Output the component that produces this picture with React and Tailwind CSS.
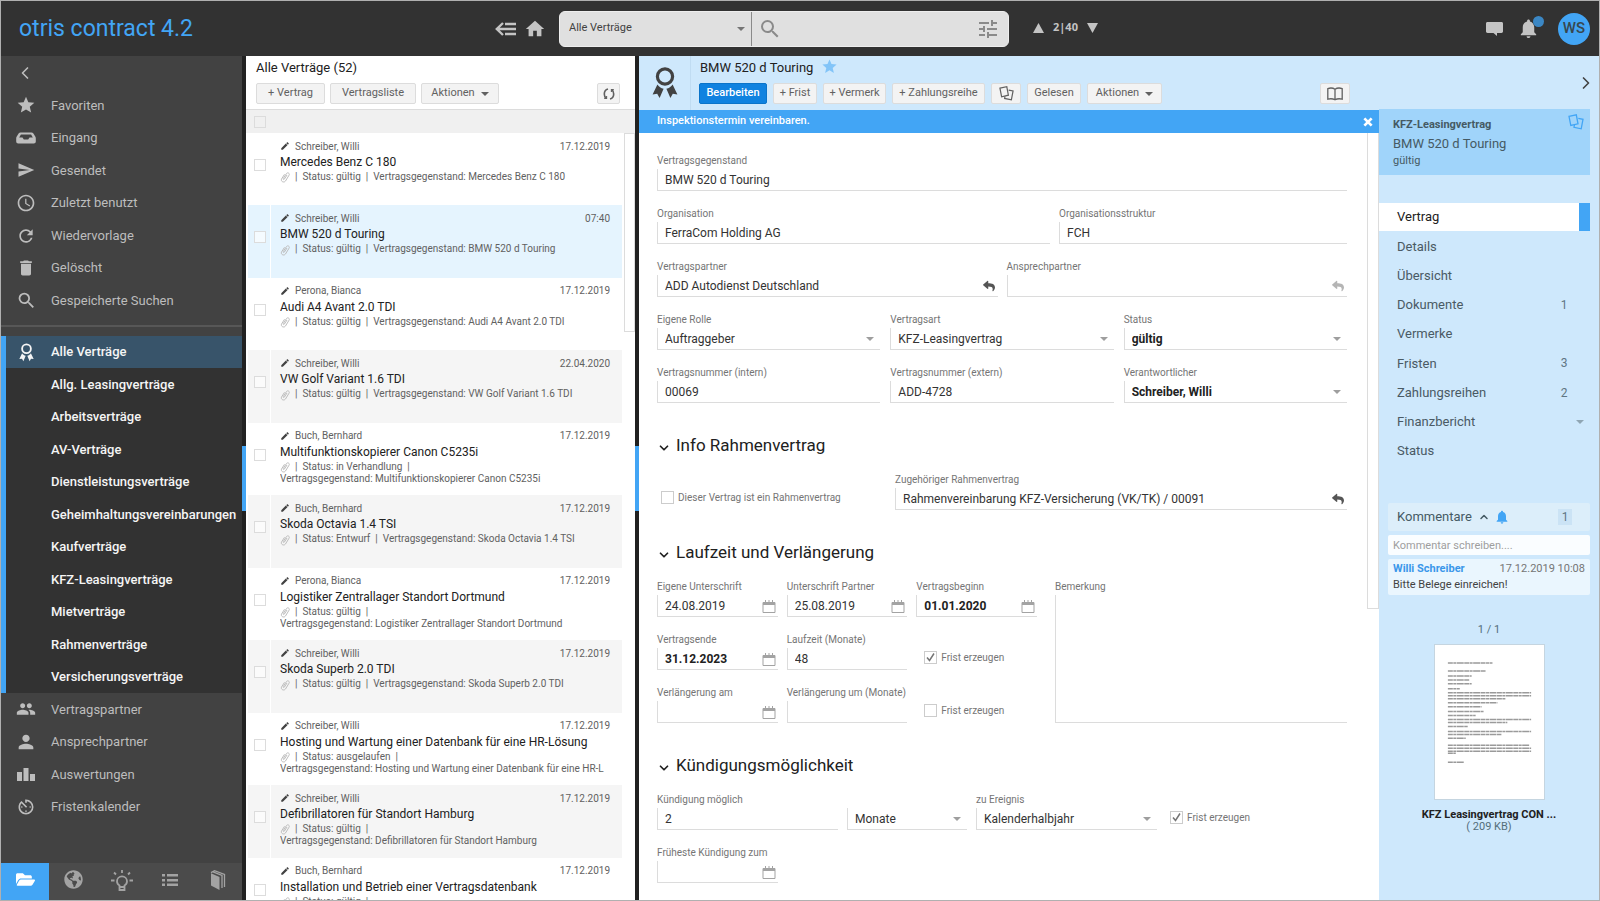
import React, { useState } from "react";
import {
  MdStar,
  MdSend,
  MdAccessTime,
  MdRefresh,
  MdDelete,
  MdSearch,
  MdPeople,
  MdPerson,
  MdAvTimer,
  MdHome,
  MdTune,
  MdNotifications,
  MdEdit,
} from "react-icons/md";
import { FaReply, FaFolderOpen, FaGlobeAmericas } from "react-icons/fa";
import { ChevronLeft, ChevronRight, ChevronDown, ChevronUp } from "lucide-react";
import clsx from "clsx";

const RibbonIcon = ({ className }) => (
  <svg viewBox="0 0 26 32" className={className} fill="none">
    <circle cx="13" cy="9.5" r="7.6" stroke="currentColor" strokeWidth="3.2" />
    <path
      d="M5.4 17.4.6 27.4l4.6-.6 2.4 4.2 4-9.2c-2.600-.6-4.700-2.200-6.200-4.400ZM20.600 17.400 25.400 27.400l-4.600-.6-2.400 4.200-4-9.200c2.600-.6 4.700-2.200 6.200-4.400Z"
      fill="currentColor"
    />
  </svg>
);

const InboxIcon = ({ className }) => (
  <svg viewBox="0 0 20 12" className={className}>
    <path
      fillRule="evenodd"
      fill="currentColor"
      d="M4.500 0.500h11c.8 0 1.400.3 1.900 1l2 3.300c.3.5.4.9.4 1.400v3.300c0 1.100-.8 2-2 2H2.200c-1.200 0-2-.9-2-2V6.200c0-.5.1-.9.4-1.400l2-3.300c.5-.7 1.100-1 1.900-1Zm.4 2L3.200 5.400h3.300l1.300 2h4.400l1.300-2h3.300l-1.700-2.900H4.900Z"
    />
  </svg>
);

const PodiumIcon = ({ className }) => (
  <svg viewBox="0 0 18 13" className={className} fill="currentColor">
    <path d="M0 4h5v9H0zM6.500 0h5v13h-5zM13 6h5v7h-5z" />
  </svg>
);

const BackListIcon = ({ className }) => (
  <svg viewBox="0 0 21 14" className={className} fill="none" stroke="currentColor" strokeWidth="2.4">
    <path d="M8 1 1.800 7 8 13M2 7h19M10 2h11M10 12h11" />
  </svg>
);

const ChatIcon = ({ className }) => (
  <svg viewBox="0 0 17 14" className={className} fill="currentColor">
    <path d="M1.500 0h14c.8 0 1.500.6 1.500 1.400v8.200c0 .8-.7 1.400-1.500 1.400H11v3L7.500 11h-6C.7 11 0 10.400 0 9.600V1.400C0 .6.700 0 1.500 0Z" />
  </svg>
);

const BulbIcon = ({ className }) => (
  <svg viewBox="0 0 22 22" className={className} fill="none" stroke="currentColor" strokeWidth="1.8">
    <path d="M8.500 21v-4.500C6.700 15.500 6 14 6 12.300a5 5 0 0 1 10 0c0 1.700-.7 3.200-2.500 4.200V21ZM8.500 18h5" />
    <path d="M11 1v3M3 3.500l2 2M19 3.500l-2 2M0 11.500h3.500M18.500 11.500H22" />
  </svg>
);

const ListIcon = ({ className }) => (
  <svg viewBox="0 0 16 12" className={className} fill="currentColor">
    <path d="M0 0h3v2.500H0zM0 5h3v2.500H0zM0 9.500h3V12H0zM5 0h11v2.500H5zM5 5h11v2.500H5zM5 9.500h11V12H5z" />
  </svg>
);

const BooksIcon = ({ className }) => (
  <svg viewBox="0 0 16 20" className={className}>
    <path d="M1 3.300 9.500 7v13L1 15.500Z" fill="currentColor" />
    <path d="M1 2.600 4.500 0.700 14.500 4.500v12.500M3 1.800 12 5.400v12.600" fill="none" stroke="currentColor" strokeWidth="1.300" />
  </svg>
);

const CopyIcon = ({ className }) => (
  <svg viewBox="0 0 16 16" className={className} fill="none" stroke="currentColor" strokeWidth="1.300">
    <path d="M1 2.300 8.300 0.800 10 9.800 2.800 11.500Z" />
    <path d="M10.300 4.300 15 5.300 13.200 14.800 6 13.300 6.400 11" />
  </svg>
);

const SyncIcon = ({ className }) => (
  <svg viewBox="0 0 12 12" className={className} fill="none" stroke="currentColor" strokeWidth="1.600">
    <path d="M5 1C2.800 1.600 1.300 3.600 1.300 6c0 1.700.6 3 1.700 4.100M7 11c2.200-.6 3.700-2.600 3.700-5 0-1.700-.6-3-1.700-4.100" />
    <path d="M1.200 10.400h2.400V8M10.800 1.600H8.400V4" strokeWidth="1.100" />
  </svg>
);

const BookIcon = ({ className }) => (
  <svg viewBox="0 0 16 14" className={className} fill="none" stroke="currentColor" strokeWidth="1.300">
    <path d="M8 2.200C6 .9 3.200.7.800 1.600v10.600c2.400-.7 5.200-.5 7.200.6 2-1.100 4.800-1.300 7.200-.6V1.600C12.800.7 10 .9 8 2.200ZM8 2.200v10.600" />
  </svg>
);

const CalendarIcon = ({ className }) => (
  <svg viewBox="0 0 14 13" className={className} fill="none" stroke="currentColor">
    <path d="M1 2.500h12v10H1z" />
    <path d="M1 3.500h12" strokeWidth="3" />
    <path d="M3.500 0v2M7 0v2M10.500 0v2" />
  </svg>
);

const ClipIcon = ({ className }) => (
  <svg viewBox="0 0 10 12" className={className} fill="none" stroke="currentColor">
    <path d="M7 4 4.300 8.200c-.5.700-1.500.2-1-.7l3.200-5c1-1.500 3.600-.2 2.600 1.600L5.500 10C4 12.200.3 10.400 1.600 7.900L4.500 3.300" />
  </svg>
);

const CloseIcon = ({ className }) => (
  <svg viewBox="0 0 11 11" className={className} fill="none" stroke="currentColor" strokeWidth="3">
    <path d="M1.500 1.500 9.500 9.500M9.500 1.500 1.500 9.500" />
  </svg>
);

const Caret = ({ className }) => (
  <svg viewBox="0 0 8 4" className={clsx("w-2 h-1 shrink-0", className)} fill="currentColor">
    <path d="M0 0h8L4 4z" />
  </svg>
);

const mainNav = [
  { label: "Favoriten", icon: <MdStar size={20} /> },
  { label: "Eingang", icon: <InboxIcon className="w-5 h-3" /> },
  { label: "Gesendet", icon: <MdSend size={18} /> },
  { label: "Zuletzt benutzt", icon: <MdAccessTime size={20} /> },
  { label: "Wiedervorlage", icon: <MdRefresh size={20} /> },
  { label: "Gelöscht", icon: <MdDelete size={20} /> },
  { label: "Gespeicherte Suchen", icon: <MdSearch size={21} /> },
];

const contractNav = [
  "Alle Verträge",
  "Allg. Leasingverträge",
  "Arbeitsverträge",
  "AV-Verträge",
  "Dienstleistungsverträge",
  "Geheimhaltungsvereinbarungen",
  "Kaufverträge",
  "KFZ-Leasingverträge",
  "Mietverträge",
  "Rahmenverträge",
  "Versicherungsverträge",
];

const extraNav = [
  { label: "Vertragspartner", icon: <MdPeople size={20} /> },
  { label: "Ansprechpartner", icon: <MdPerson size={22} /> },
  { label: "Auswertungen", icon: <PodiumIcon className="w-[18px] h-[13px]" /> },
  { label: "Fristenkalender", icon: <MdAvTimer size={20} /> },
];

const bottomTabs = [
  { label: "Ordner", icon: <FaFolderOpen size={19} /> },
  { label: "Global", icon: <FaGlobeAmericas size={19} /> },
  { label: "Ideen", icon: <BulbIcon className="w-[22px] h-[22px]" /> },
  { label: "Listen", icon: <ListIcon className="w-4 h-3" /> },
  { label: "Handbuch", icon: <BooksIcon className="w-4 h-5" /> },
];

const contracts = [
  { person: "Schreiber, Willi", date: "17.12.2019", title: "Mercedes Benz C 180", status: "gültig" },
  { person: "Schreiber, Willi", date: "07:40", title: "BMW 520 d Touring", status: "gültig" },
  { person: "Perona, Bianca", date: "17.12.2019", title: "Audi A4 Avant 2.0 TDI", status: "gültig" },
  { person: "Schreiber, Willi", date: "22.04.2020", title: "VW Golf Variant 1.6 TDI", status: "gültig" },
  { person: "Buch, Bernhard", date: "17.12.2019", title: "Multifunktionskopierer Canon C5235i", status: "in Verhandlung", wrap: true },
  { person: "Buch, Bernhard", date: "17.12.2019", title: "Skoda Octavia 1.4 TSI", status: "Entwurf" },
  { person: "Perona, Bianca", date: "17.12.2019", title: "Logistiker Zentrallager Standort Dortmund", status: "gültig", wrap: true },
  { person: "Schreiber, Willi", date: "17.12.2019", title: "Skoda Superb 2.0 TDI", status: "gültig" },
  {
    person: "Schreiber, Willi",
    date: "17.12.2019",
    title: "Hosting und Wartung einer Datenbank für eine HR-Lösung",
    subject: "Hosting und Wartung einer Datenbank für eine HR-L",
    status: "ausgelaufen",
    wrap: true,
  },
  { person: "Schreiber, Willi", date: "17.12.2019", title: "Defibrillatoren für Standort Hamburg", status: "gültig", wrap: true },
  { person: "Buch, Bernhard", date: "17.12.2019", title: "Installation und Betrieb einer Vertragsdatenbank", status: "gültig", wrap: true },
];

const detailTabs = [
  { label: "Vertrag" },
  { label: "Details" },
  { label: "Übersicht" },
  { label: "Dokumente", count: 1 },
  { label: "Vermerke" },
  { label: "Fristen", count: 3 },
  { label: "Zahlungsreihen", count: 2 },
  { label: "Finanzbericht", caret: true },
  { label: "Status" },
];

const Header = () => (
  <header className="flex items-center h-[55px] shrink-0 bg-[#323232] text-[#c4c4c4]">
    <div className="flex items-center w-[558px] shrink-0 pl-[18px] pr-[13px]">
      <h1 className="text-[23px] leading-7 text-[#42a5f5]">otris contract 4.2</h1>
      <button aria-label="Zurück zur Liste" className="ml-auto">
        <BackListIcon className="w-[21px] h-[14px]" />
      </button>
      <button aria-label="Startseite" className="ml-2">
        <MdHome size={22} />
      </button>
    </div>
    <div className="flex w-[450px] h-9 rounded-md bg-[#e0e0e0] border border-[#eeeeee] text-[#8a8a8a]">
      <div className="relative flex items-center w-[192px] border-r border-[#8a8a8a]">
        <select aria-label="Suchbereich" className="appearance-none w-full h-full pl-[9px] text-[11px] text-[#424242] outline-none">
          <option>Alle Verträge</option>
        </select>
        <Caret className="absolute right-[6px] text-[#757575] pointer-events-none" />
      </div>
      <MdSearch size={24} className="self-center ml-[6px] shrink-0" />
      <input aria-label="Suche" className="flex-1 min-w-0 px-1 text-[11px] outline-none" />
      <button aria-label="Suchfilter" className="pr-2">
        <MdTune size={24} />
      </button>
    </div>
    <div className="flex items-center gap-[9px] ml-6 pb-[2px] font-['Open_Sans',sans-serif] text-[11px] font-bold">
      <button aria-label="Vorheriger Vertrag">
        <svg viewBox="0 0 11 10" className="w-[11px] h-[10px]" fill="currentColor">
          <path d="M5.500 0 11 10H0z" />
        </svg>
      </button>
      <span>2|40</span>
      <button aria-label="Nächster Vertrag">
        <svg viewBox="0 0 11 10" className="w-[11px] h-[10px]" fill="currentColor">
          <path d="M0 0h11L5.500 10z" />
        </svg>
      </button>
    </div>
    <div className="flex items-center ml-auto pr-[9px]">
      <button aria-label="Nachrichten">
        <ChatIcon className="w-[17px] h-[14px]" />
      </button>
      <button aria-label="Benachrichtigungen" className="relative ml-[14px]">
        <MdNotifications size={23} />
        <span className="absolute -right-1 -top-px w-[11px] h-[11px] rounded-full bg-[#3b87c4]" />
      </button>
      <button className="w-8 h-8 ml-[18px] rounded-full bg-[#42a5f5] text-[#37474f] text-[15px] font-medium">WS</button>
    </div>
  </header>
);

const NavItem = ({ label, icon }) => (
  <a href="#" className="flex flex-1 items-center">
    <span className="flex justify-center w-[50px]">{icon}</span>
    {label}
  </a>
);

const Sidebar = () => (
  <aside className="flex flex-col w-[241px] shrink-0 bg-[#424242] text-[13px] text-[#bdbdbd] whitespace-nowrap overflow-hidden">
    <button aria-label="Menü einklappen" className="flex items-center h-[33px] shrink-0 pl-[14px]">
      <ChevronLeft size={20} strokeWidth={2} />
    </button>
    <nav className="flex flex-col h-[228px] shrink-0">
      {mainNav.map((item) => (
        <NavItem key={item.label} {...item} />
      ))}
    </nav>
    <div className="h-[2px] shrink-0 mt-2 mb-[9px] bg-[#575757]" />
    <nav className="flex flex-col h-[357px] shrink-0 border-l-[5px] border-[#42a5f5] bg-[#323232] font-medium text-[#f5f5f5]">
      {contractNav.map((label, i) => (
        <a key={label} href="#" className={clsx("flex flex-1 items-center", i === 0 && "bg-[#38546a]")}>
          <span className="flex justify-center w-[45px] pr-1">
            {i === 0 && <RibbonIcon className="w-[15px] h-[19px]" />}
          </span>
          {label}
        </a>
      ))}
    </nav>
    <nav className="flex flex-col h-[130px] shrink-0">
      {extraNav.map((item) => (
        <NavItem key={item.label} {...item} />
      ))}
    </nav>
    <div className="flex h-[37px] shrink-0 mt-auto bg-[#4b4b4b] text-[#a3a3a3]">
      {bottomTabs.map((tab, i) => (
        <button
          key={tab.label}
          aria-label={tab.label}
          className={clsx("flex flex-1 items-center justify-center pb-1", i === 0 && "bg-[#42a5f5] text-white")}
        >
          {tab.icon}
        </button>
      ))}
    </div>
  </aside>
);

const Splitter = () => (
  <div className="flex items-center w-1 shrink-0 bg-[#212121]">
    <div className="w-full h-[65px] bg-[#42a5f5]" />
  </div>
);

const ToolButton = ({ children, className, ...rest }) => (
  <button
    {...rest}
    className={clsx(
      "flex items-center justify-center h-[21px] rounded-xs border border-[#dcdcdc] bg-[#f3f3f3] text-[11px] text-[#616161] whitespace-nowrap",
      className,
    )}
  >
    {children}
  </button>
);

const ContractRow = ({ contract, index }) => {
  const { person, date, title, subject = title, status, wrap } = contract;
  const background = index === 1 ? "bg-[#e5f4fe]" : index % 2 === 1 ? "bg-[#f5f5f5]" : "bg-white";

  return (
    <li className="flex flex-1 gap-px overflow-hidden">
      <div className={clsx("flex justify-center w-[22px] shrink-0 pl-[2px] pt-[26px]", background)}>
        <input
          type="checkbox"
          aria-label={title}
          className="appearance-none w-3 h-3 border border-[#dcdcdc] bg-white/60"
        />
      </div>
      <div className={clsx("flex-1 min-w-0 pt-[5px] pl-[9px] pr-3 text-[10px] text-[#616161]", background)}>
        <div className="flex items-center h-4">
          <MdEdit size={10} className="mr-[5px] text-[#424242]" />
          {person}
          <span className="ml-auto">{date}</span>
        </div>
        <h3 className="text-[12px] leading-[17px] text-[#212121] whitespace-nowrap">{title}</h3>
        <div className="leading-3 whitespace-nowrap overflow-hidden">
          <ClipIcon className="inline w-[10px] h-3 mr-[5px] text-[#bdbdbd]" />
          |&nbsp; Status: {status} &nbsp;|{wrap ? " " : <>&nbsp; </>}
          <span className={clsx(wrap && "block")}>Vertragsgegenstand: {subject}</span>
        </div>
      </div>
    </li>
  );
};

const ContractList = () => (
  <section className="flex flex-col w-[389px] shrink-0 bg-white">
    <div className="h-[53px] shrink-0 pl-[10px] pr-[15px] pt-1">
      <h2 className="text-[13px] leading-4 text-[#212121]">Alle Verträge (52)</h2>
      <div className="flex gap-[5px] pt-[7px]">
        <ToolButton className="w-[69px]">+ Vertrag</ToolButton>
        <ToolButton className="w-[86px]">Vertragsliste</ToolButton>
        <ToolButton className="w-[78px] gap-[6px]">
          Aktionen <Caret />
        </ToolButton>
        <ToolButton aria-label="Aktualisieren" className="w-[23px] ml-auto">
          <SyncIcon className="w-3 h-3" />
        </ToolButton>
      </div>
    </div>
    <div className="flex items-center h-6 shrink-0 pl-2 border-t border-[#dcdcdc] bg-[#f0f0f0]">
      <input type="checkbox" aria-label="Alle auswählen" className="appearance-none w-3 h-3 border border-[#dcdcdc]" />
    </div>
    <div className="flex flex-1 min-h-0 pl-[2px]">
      <div className="flex-1 min-w-0 overflow-hidden">
        <ul className="flex flex-col h-[797px]">
          {contracts.map((contract, i) => (
            <ContractRow key={contract.title} contract={contract} index={i} />
          ))}
        </ul>
      </div>
      <div className="w-[13px] shrink-0 pl-[2px]">
        <div className="h-[26%] border border-[#dcdcdc]" />
      </div>
    </div>
  </section>
);

const inputBox = "w-full h-[22px] border-l border-b border-[#dcdcdc] bg-white pl-[7px] text-[12px] outline-none";

const Field = ({ id, label, value = "", kind = "text", bold, muted }) => {
  const textStyle = bold ? "font-bold text-[#212121]" : "text-[#333333]";

  return (
    <div className="min-w-0">
      <label htmlFor={id} className="block h-4 text-[10px] leading-4 text-[#757575] whitespace-nowrap">
        {label}
      </label>
      <div className="relative flex items-center">
        {kind === "select" ? (
          <select id={id} defaultValue={value} className={clsx("appearance-none", inputBox, textStyle)}>
            <option>{value}</option>
          </select>
        ) : (
          <input id={id} defaultValue={value} className={clsx(inputBox, textStyle)} />
        )}
        {kind === "select" && <Caret className="absolute right-[6px] text-[#9e9e9e] pointer-events-none" />}
        {kind === "date" && (
          <button type="button" aria-label={`${label} wählen`} className="absolute right-[2px] text-[#a3a3a3]">
            <CalendarIcon className="w-[14px] h-[13px]" />
          </button>
        )}
        {kind === "lookup" && (
          <button
            type="button"
            aria-label={`${label} suchen`}
            className={clsx("absolute right-[3px]", muted ? "text-[#b5b5b5]" : "text-[#555555]")}
          >
            <FaReply size={12} />
          </button>
        )}
      </div>
    </div>
  );
};

const CheckField = ({ label, checked = false, className }) => (
  <label className={clsx("flex items-center gap-1 h-[26px] self-end text-[10px] text-[#757575] whitespace-nowrap", className)}>
    <span className="relative flex">
      <input
        type="checkbox"
        defaultChecked={checked}
        className="peer appearance-none w-[13px] h-[13px] border border-[#cccccc] bg-white"
      />
      <svg
        viewBox="0 0 13 13"
        className="absolute inset-0 hidden peer-checked:block pointer-events-none"
        fill="none"
        stroke="#757575"
        strokeWidth="1.5"
      >
        <path d="M3 6.500 5.500 9.500 10 2.500" />
      </svg>
    </span>
    {label}
  </label>
);

const SectionTitle = ({ children }) => (
  <h3 className="flex items-center gap-[5px] h-6 mt-[31px] mb-[14px] text-[17px] text-[#212121]">
    <ChevronDown size={14} strokeWidth={3} className="mt-1" />
    {children}
  </h3>
);

const ContractForm = () => (
  <form className="flex-1 min-w-0 pt-5 pl-[18px] pr-5 overflow-hidden">
    <div className="flex flex-col gap-[15px]">
      <Field id="gegenstand" label="Vertragsgegenstand" value="BMW 520 d Touring" />
      <div className="grid grid-cols-[393fr_288fr] gap-[9px]">
        <Field id="organisation" label="Organisation" value="FerraCom Holding AG" />
        <Field id="struktur" label="Organisationsstruktur" value="FCH" />
      </div>
      <div className="grid grid-cols-2 gap-[9px]">
        <Field id="partner" label="Vertragspartner" value="ADD Autodienst Deutschland" kind="lookup" />
        <Field id="ansprech" label="Ansprechpartner" kind="lookup" muted />
      </div>
      <div className="grid grid-cols-3 gap-x-[10px] gap-y-[15px]">
        <Field id="rolle" label="Eigene Rolle" value="Auftraggeber" kind="select" />
        <Field id="art" label="Vertragsart" value="KFZ-Leasingvertrag" kind="select" />
        <Field id="status" label="Status" value="gültig" kind="select" bold />
        <Field id="intern" label="Vertragsnummer (intern)" value="00069" />
        <Field id="extern" label="Vertragsnummer (extern)" value="ADD-4728" />
        <Field id="verantwortlich" label="Verantwortlicher" value="Schreiber, Willi" kind="select" bold />
      </div>
    </div>

    <SectionTitle>Info Rahmenvertrag</SectionTitle>
    <div className="grid grid-cols-[230fr_452fr] gap-2">
      <CheckField label="Dieser Vertrag ist ein Rahmenvertrag" className="pl-1" />
      <Field
        id="rahmen"
        label="Zugehöriger Rahmenvertrag"
        value="Rahmenvereinbarung KFZ-Versicherung (VK/TK) / 00091"
        kind="lookup"
      />
    </div>

    <SectionTitle>Laufzeit und Verlängerung</SectionTitle>
    <div className="grid grid-cols-[380fr_292fr] gap-[18px]">
      <div className="grid grid-cols-3 gap-x-[9px] gap-y-[15px]">
        <Field id="unterschrift" label="Eigene Unterschrift" value="24.08.2019" kind="date" />
        <Field id="unterschrift-partner" label="Unterschrift Partner" value="25.08.2019" kind="date" />
        <Field id="beginn" label="Vertragsbeginn" value="01.01.2020" kind="date" bold />
        <Field id="ende" label="Vertragsende" value="31.12.2023" kind="date" bold />
        <Field id="laufzeit" label="Laufzeit (Monate)" value="48" />
        <CheckField label="Frist erzeugen" checked className="pl-2" />
        <Field id="verl-am" label="Verlängerung am" kind="date" />
        <Field id="verl-um" label="Verlängerung um (Monate)" />
        <CheckField label="Frist erzeugen" className="pl-2" />
      </div>
      <div className="flex flex-col">
        <label htmlFor="bemerkung" className="h-4 text-[10px] leading-4 text-[#757575]">
          Bemerkung
        </label>
        <textarea id="bemerkung" className="flex-1 resize-none border-l border-b border-[#dcdcdc] p-1 text-[12px] outline-none" />
      </div>
    </div>

    <SectionTitle>Kündigungsmöglichkeit</SectionTitle>
    <div className="grid grid-cols-[181fr_120fr_181fr_181fr] gap-x-[9px] gap-y-[15px]">
      <Field id="kuendigung" label="Kündigung möglich" value="2" />
      <Field id="einheit" label="" value="Monate" kind="select" />
      <Field id="ereignis" label="zu Ereignis" value="Kalenderhalbjahr" kind="select" />
      <CheckField label="Frist erzeugen" checked className="pl-1" />
      <div className="w-[121px]">
        <Field id="frueheste" label="Früheste Kündigung zum" kind="date" />
      </div>
    </div>
  </form>
);

const ContractDetail = () => {
  const [showNotice, setShowNotice] = useState(true);

  return (
    <main className="flex flex-col flex-1 min-w-0 bg-white">
      <div className="flex h-[54px] shrink-0 bg-[#cee8fc]">
        <div className="flex items-center justify-center w-[52px] shrink-0 border-r border-[#c0dcf2] text-[#424242]">
          <RibbonIcon className="w-[26px] h-[32px]" />
        </div>
        <div className="flex-1 min-w-0 pl-2 pr-[29px] pt-1">
          <div className="flex items-center gap-2 h-4 pl-px text-[13px] text-[#212121]">
            <h2>BMW 520 d Touring</h2>
            <MdStar size={17} className="-mt-1 text-[#82c4f8]" />
          </div>
          <div className="flex gap-[6px] pt-[7px]">
            <button className="w-[68px] h-[21px] rounded-xs border border-[#0b74c9] bg-[#0f82e0] text-[11px] font-medium text-white">
              Bearbeiten
            </button>
            <ToolButton className="w-[44px]">+ Frist</ToolButton>
            <ToolButton className="w-[63px]">+ Vermerk</ToolButton>
            <ToolButton className="w-[93px]">+ Zahlungsreihe</ToolButton>
            <ToolButton aria-label="Kopieren" className="w-[30px]">
              <CopyIcon className="w-[15px] h-[15px]" />
            </ToolButton>
            <ToolButton className="w-[54px]">Gelesen</ToolButton>
            <ToolButton className="w-[75px] gap-[6px]">
              Aktionen <Caret />
            </ToolButton>
            <ToolButton aria-label="Akte öffnen" className="w-[30px] ml-auto">
              <BookIcon className="w-4 h-[14px]" />
            </ToolButton>
          </div>
        </div>
      </div>
      {showNotice && (
        <div className="flex items-center justify-between h-[23px] shrink-0 pl-[18px] pr-[6px] bg-[#42a5f5] text-[11px] font-medium text-white">
          Inspektionstermin vereinbaren.
          <button aria-label="Hinweis schließen" onClick={() => setShowNotice(false)}>
            <CloseIcon className="w-[10px] h-[10px]" />
          </button>
        </div>
      )}
      <div className="flex flex-1 min-h-0">
        <ContractForm />
        <div className="w-3 shrink-0">
          <div className="h-[62%] border border-t-0 border-[#dcdcdc]" />
        </div>
      </div>
    </main>
  );
};

// [y, width] of the text lines on the document preview
const previewLines = [
  [18, 45], [26, 38], [31, 24], [35, 22], [39, 24], [44, 12],
  [48, 84], [51, 84], [54, 58], [58, 50], [62, 34], [67, 36], [71, 28],
  [75, 84], [78, 60], [82, 20], [87, 84], [90, 54], [94, 18],
  [101, 82], [104, 84], [107, 84], [109, 8], [118, 16],
];

const InfoPanel = () => (
  <aside className="flex flex-col w-[220px] shrink-0 pr-[9px] bg-[#cee8fc] text-[13px] text-[#546e7a] overflow-hidden">
    <button aria-label="Bereich einklappen" className="flex items-center justify-end h-[53px] shrink-0 -mr-[6px] text-[#424242]">
      <ChevronRight size={20} />
    </button>
    <div className="flex justify-between h-[66px] shrink-0 pl-[14px] pr-[6px] pt-2 bg-[#a0d4fa]">
      <div className="text-[#455a64]">
        <p className="text-[11px] leading-4 font-bold">KFZ-Leasingvertrag</p>
        <p className="leading-[22px]">BMW 520 d Touring</p>
        <p className="text-[11px] leading-3">gültig</p>
      </div>
      <button aria-label="Kopieren" className="self-start -mt-[3px] text-[#42a5f5]">
        <CopyIcon className="w-4 h-4" />
      </button>
    </div>
    <nav className="flex flex-col justify-between h-[262px] shrink-0 mt-7">
      {detailTabs.map((tab, i) => (
        <a
          key={tab.label}
          href="#"
          className={clsx(
            "flex items-center h-7 pl-[18px]",
            i === 0 ? "border-r-[11px] border-[#42a5f5] bg-white text-[#212121]" : "text-[#4a5a64]",
          )}
        >
          {tab.label}
          {tab.count && <span className="w-4 ml-auto mr-[18px] text-center text-[12px] text-[#607583]">{tab.count}</span>}
          {tab.caret && <Caret className="ml-auto mr-[6px] text-[#8fa5b3]" />}
        </a>
      ))}
    </nav>
    <section className="flex flex-col gap-1 mt-[38px] pl-[9px]">
      <div className="flex items-center h-7 pl-[9px] rounded-xs bg-[#dceefa] text-[#455a64]">
        Kommentare
        <ChevronUp size={12} strokeWidth={3} className="ml-[6px]" />
        <MdNotifications size={16} className="ml-1 text-[#42a5f5]" />
        <span className="w-[14px] ml-auto mr-[18px] bg-[#cbe3f5] text-center text-[12px] leading-4 text-[#607583]">1</span>
      </div>
      <input
        aria-label="Kommentar schreiben"
        placeholder="Kommentar schreiben...."
        className="w-full h-5 px-[5px] rounded-xs bg-[#fafdff] text-[11px] placeholder:text-[#9e9e9e] outline-none"
      />
      <article className="px-[5px] py-[2px] rounded-xs bg-[#eaf6fe] text-[11px] leading-4 text-[#424242]">
        <div className="flex justify-between">
          <span className="font-bold text-[#3a97ea]">Willi Schreiber</span>
          <time className="text-[#757575]">17.12.2019 10:08</time>
        </div>
        <p>Bitte Belege einreichen!</p>
      </article>
    </section>
    <figure className="flex flex-col items-center mt-[27px] pl-[9px] text-[11px] leading-3">
      <span className="leading-4">1 / 1</span>
      <svg viewBox="0 0 110 155" className="w-[111px] h-[156px] mt-[6px] mb-[9px] border border-[#c5d5e0] bg-white">
        {previewLines.map(([y, width]) => (
          <line
            key={y}
            x1="13"
            x2={13 + width}
            y1={y}
            y2={y}
            stroke="#9a9a9a"
            strokeWidth="1.5"
            strokeDasharray="5 0.5 3 0.5 7 0.5"
          />
        ))}
      </svg>
      <figcaption className="text-center">
        <span className="block font-bold text-[#212121]">KFZ Leasingvertrag CON ...</span>( 209 KB)
      </figcaption>
    </figure>
  </aside>
);

const App = () => {
  return (
    <div className="flex flex-col h-screen border border-[#b0b0b0] font-[Roboto,sans-serif] overflow-hidden">
      <Header />
      <div className="flex flex-1 min-h-0">
        <Sidebar />
        <Splitter />
        <ContractList />
        <Splitter />
        <ContractDetail />
        <InfoPanel />
      </div>
    </div>
  );
};

export default App;
